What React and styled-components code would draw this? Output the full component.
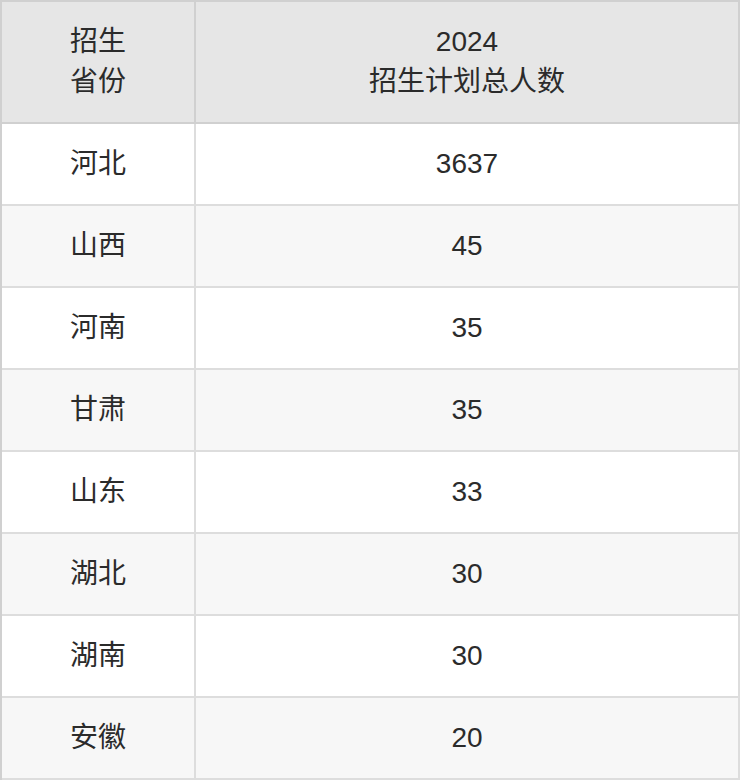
import React from "react";
import styled, { createGlobalStyle } from "styled-components";

const GlobalStyle = createGlobalStyle`
    html, body {
        margin: 0;
        padding: 0;
        background: #ffffff;
    }
    body {
        font-family: "Liberation Sans", Arial, "Noto Sans CJK SC", sans-serif;
    }
`

const PlanTable = styled.table`
    width: 740px;
    border-collapse: separate;
    border-spacing: 0;
    border-top: 2px solid #d0d0d0;
    border-left: 2px solid #d0d0d0;
    table-layout: fixed;
    font-size: 28px;
    line-height: 40px;
    color: #2b2b2b;
`

const HeadCell = styled.th`
    height: 120px;
    padding: 0;
    background: #e6e6e6;
    font-weight: normal;
    text-align: center;
    vertical-align: middle;
    border-right: 2px solid #d0d0d0;
    border-bottom: 2px solid #d0d0d0;
`

const Row = styled.tr`
    background: ${props => (props.$odd ? "#f7f7f7" : "#ffffff")};
`

const Cell = styled.td`
    height: 80px;
    padding: 0;
    text-align: center;
    vertical-align: middle;
    border-right: 2px solid #dddddd;
    border-bottom: 2px solid #dddddd;
`

const rows = [
    ["河北", 3637],
    ["山西", 45],
    ["河南", 35],
    ["甘肃", 35],
    ["山东", 33],
    ["湖北", 30],
    ["湖南", 30],
    ["安徽", 20],
];

export default function App() {
    return (
        <>
            <GlobalStyle />
            <PlanTable>
                <colgroup>
                    <col style={{ width: "194px" }} />
                    <col />
                </colgroup>
                <thead>
                    <tr>
                        <HeadCell>招生<br />省份</HeadCell>
                        <HeadCell>2024<br />招生计划总人数</HeadCell>
                    </tr>
                </thead>
                <tbody>
                    {rows.map(([province, total], i) => (
                        <Row key={province + i} $odd={i % 2 === 1}>
                            <Cell>{province}</Cell>
                            <Cell>{total}</Cell>
                        </Row>
                    ))}
                </tbody>
            </PlanTable>
        </>
    );
}
